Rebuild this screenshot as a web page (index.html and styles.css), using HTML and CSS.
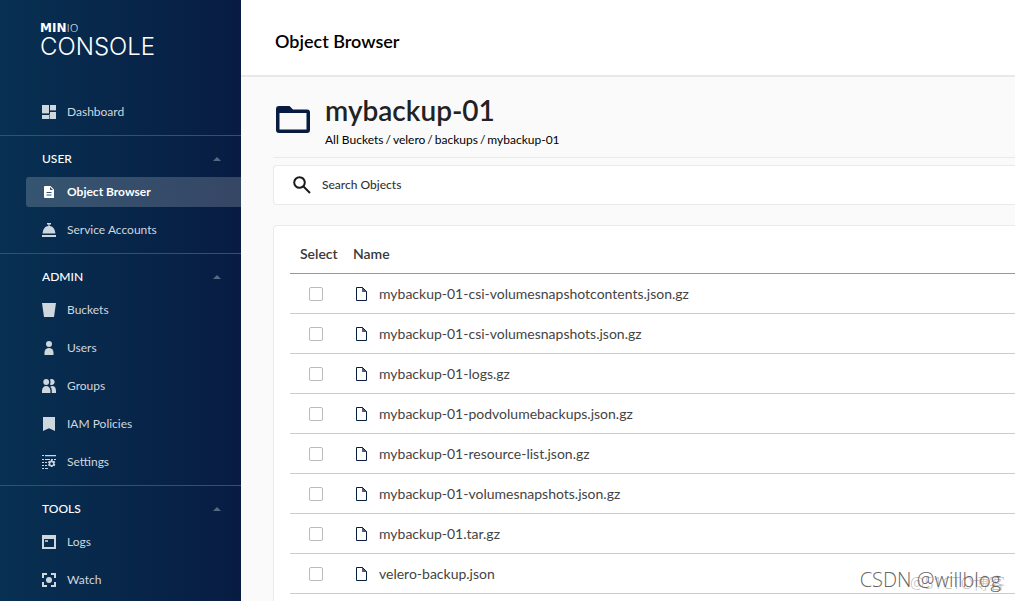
FILE: index.html
```html
<!DOCTYPE html>
<html lang="en">
<head>
<meta charset="utf-8">
<title>MinIO Console</title>
<link rel="stylesheet" href="styles.css">
</head>
<body>
<svg class="defs" aria-hidden="true">
  <symbol id="file" viewBox="0 0 12 16"><path d="M1.500 1.500h6l4 4v9h-10z" fill="none" stroke="currentColor"/><path d="M7 1l5 5H7z" fill="currentColor" opacity=".7"/></symbol>
</svg>
<div class="app">
  <aside class="sidebar">
    <div class="logo"><div class="logo-top"><b>MIN</b>IO</div><div class="logo-main">CONSOLE</div></div>
    <nav>
      <div class="group group-first">
        <a class="item" href="#"><svg viewBox="0 0 14 14"><path d="M0 0h7v8H0zM8 0h6v5H8zM0 10h7v4H0zM8 7h6v7H8z"/><path d="M0 8h7v1H0zM8 5h6v1H8zM7 9h1v5H7z" opacity=".4"/></svg>Dashboard</a>
      </div>
      <div class="group">
        <button class="heading" type="button">USER<span class="caret"></span></button>
        <a class="item active" href="#"><svg viewBox="0 0 14 14"><path fill-rule="evenodd" d="M3 1h5.500L12 4.500V13H3a1 1 0 0 1-1-1V2a1 1 0 0 1 1-1zM8 2v3h3zM4.500 7v1h5V7zM4.500 9.500v1h5v-1z"/></svg>Object Browser</a>
        <a class="item" href="#"><svg viewBox="0 0 14 14"><path d="M5 0h4v1.500H7.600V3C11 3.200 13 6 13.400 10.500H.6C1 6 3 3.200 6.400 3V1.500H5zM0 12h14v2H0z"/></svg>Service Accounts</a>
      </div>
      <div class="group">
        <button class="heading" type="button">ADMIN<span class="caret"></span></button>
        <a class="item" href="#"><svg viewBox="0 0 14 14"><path d="M0 0h14l-2 14H2z"/></svg>Buckets</a>
        <a class="item" href="#"><svg viewBox="0 0 14 14"><circle cx="7" cy="3" r="3"/><path d="M2.500 14v-2.500a4.500 4.500 0 0 1 9 0V14z"/></svg>Users</a>
        <a class="item" href="#"><svg viewBox="0 0 14 14"><circle cx="4.200" cy="3" r="2.900"/><path d="M8 .6a2.900 2.900 0 1 1 0 4.800Q9 3 8 .6zM0 14v-2.500Q.5 7 4.200 7T8.400 11.500V14zM8.200 7.400Q13.500 5.800 14 11.500V14H9.800v-2.500Q9.700 9 8.200 7.400z"/></svg>Groups</a>
        <a class="item" href="#"><svg viewBox="0 0 14 14"><path d="M1 0h12v14l-6-2.800L1 14z"/></svg>IAM Policies</a>
        <a class="item" href="#"><svg viewBox="0 0 14 14"><path d="M0 0h2v1H0zM3 0h11v1.200H3zM0 4h2v1H0zM3 4h5v1H3zM9 4h2v1H9zM12 4h2v1h-2zM0 7h2v1H0zM3 7h2v1H3zM0 10h2v1H0zM3 10h2v1H3zM0 13h2v1H0zM3 13h3v1H3z"/><path fill-rule="evenodd" d="M8.800 5h1.700l.4 1.300 1.500-.5.900 1.500-1 1 1 1.400-.9 1.500-1.500-.5-.4 1.300H8.800l-.4-1.300-1.500.5L6 9.700l1-1-1-1.400.9-1.500 1.500.5zM9.600 7.300a1.400 1.400 0 1 0 .1 0z"/></svg>Settings</a>
      </div>
      <div class="group">
        <button class="heading" type="button">TOOLS<span class="caret"></span></button>
        <a class="item" href="#"><svg viewBox="0 0 14 14"><path fill-rule="evenodd" d="M0 0h14v14H0zM2 4v8h10V4z"/><path d="M3 5h3v2H3z" opacity=".8"/></svg>Logs</a>
        <a class="item" href="#"><svg viewBox="0 0 14 14"><path d="M0 0h5v2H2v3H0zM9 0h5v5h-2V2H9zM0 9h2v3h3v2H0zM12 9h2v5H9v-2h3z"/><circle cx="7" cy="7" r="3"/></svg>Watch</a>
      </div>
    </nav>
  </aside>
  <main class="main">
    <header class="topbar">Object Browser</header>
    <div class="content">
      <section class="bucket">
        <svg class="folder" viewBox="0 0 34 28"><path fill-rule="evenodd" d="M3 0h10.500L17 3.500h14a3 3 0 0 1 3 3V24a3 3 0 0 1-3 3H3a3 3 0 0 1-3-3V3a3 3 0 0 1 3-3zM3.500 7v16.500h27V7z"/></svg>
        <div>
          <h1>mybackup-01</h1>
          <div class="crumbs"><a href="#">All Buckets</a><span>/</span><a href="#">velero</a><span>/</span><a href="#">backups</a><span>/</span><a href="#">mybackup-01</a></div>
        </div>
      </section>
      <label class="search">
        <svg viewBox="0 0 18 18"><circle cx="6.500" cy="6.500" r="5.300"/><path d="M10.500 10.500l6.500 6.500"/></svg>
        <input type="search" aria-label="Search Objects" placeholder="Search Objects">
      </label>
      <section class="card">
        <table>
          <thead><tr><th class="select">Select</th><th>Name</th></tr></thead>
          <tbody>
            <tr><td class="select"><input type="checkbox" aria-label="Select mybackup-01-csi-volumesnapshotcontents.json.gz"></td><td><span class="name"><svg><use href="#file"/></svg>mybackup-01-csi-volumesnapshotcontents.json.gz</span></td></tr>
            <tr><td class="select"><input type="checkbox" aria-label="Select mybackup-01-csi-volumesnapshots.json.gz"></td><td><span class="name"><svg><use href="#file"/></svg>mybackup-01-csi-volumesnapshots.json.gz</span></td></tr>
            <tr><td class="select"><input type="checkbox" aria-label="Select mybackup-01-logs.gz"></td><td><span class="name"><svg><use href="#file"/></svg>mybackup-01-logs.gz</span></td></tr>
            <tr><td class="select"><input type="checkbox" aria-label="Select mybackup-01-podvolumebackups.json.gz"></td><td><span class="name"><svg><use href="#file"/></svg>mybackup-01-podvolumebackups.json.gz</span></td></tr>
            <tr><td class="select"><input type="checkbox" aria-label="Select mybackup-01-resource-list.json.gz"></td><td><span class="name"><svg><use href="#file"/></svg>mybackup-01-resource-list.json.gz</span></td></tr>
            <tr><td class="select"><input type="checkbox" aria-label="Select mybackup-01-volumesnapshots.json.gz"></td><td><span class="name"><svg><use href="#file"/></svg>mybackup-01-volumesnapshots.json.gz</span></td></tr>
            <tr><td class="select"><input type="checkbox" aria-label="Select mybackup-01.tar.gz"></td><td><span class="name"><svg><use href="#file"/></svg>mybackup-01.tar.gz</span></td></tr>
            <tr><td class="select"><input type="checkbox" aria-label="Select velero-backup.json"></td><td><span class="name"><svg><use href="#file"/></svg>velero-backup.json</span></td></tr>
          </tbody>
        </table>
      </section>
    </div>
  </main>
  <div class="mark mark-back">@51CTO博客</div>
  <div class="mark mark-front">CSDN @willblog</div>
</div>
</body>
</html>
```
FILE: styles.css
```css
* { box-sizing: border-box; }
body { margin: 0; font: 14px/20px Lato, sans-serif; color: #222; }
a { color: inherit; text-decoration: none; }
.defs { display: none; }
.app { position: relative; display: flex; height: 100vh; overflow: hidden; }

.sidebar { flex: 0 0 241px; overflow: hidden; background: linear-gradient(90deg, #073052 0%, #081c42 100%); color: #fff; }
.logo { height: 97px; padding: 22px 0 0 40px; }
.logo-top { font: 300 11px/12px "DejaVu Sans", sans-serif; }
.logo-top b { font-size: 12px; font-weight: 700; }
.logo-main { font: 300 24px/24px Inter, sans-serif; }
.group { border-top: 1px solid #35506b; padding: 8px 0; display: flex; flex-direction: column; gap: 8px; }
.group-first { border-top: 0; padding-top: 0; }
.heading { display: flex; align-items: center; justify-content: space-between; height: 30px; margin-bottom: -5px; padding: 0 20px 0 42px; border: 0; background: none; color: #fff; font: 500 12px/20px Lato, sans-serif; }
.caret { border: 4px solid transparent; border-top: 0; border-bottom-color: #566983; }
.item { display: flex; align-items: center; gap: 11px; height: 30px; margin-left: 26px; padding-left: 16px; border-radius: 3px 0 0 3px; color: #d0d7df; font-size: 12px; }
.item svg { width: 14px; height: 14px; fill: #ced6de; }
.item.active { background: rgba(255, 255, 255, .19); color: #fff; font-weight: 700; }
.item.active svg { fill: #fff; }

.main { flex: 1; min-width: 0; background: #fafafa; }
.topbar { height: 77px; padding: 29px 34px 0; border-bottom: 2px solid #e8e8e8; background: #fff; color: #000; font-size: 18px; line-height: 24px; font-weight: 600; }
.content { padding-left: 32px; }
.bucket { display: flex; align-items: center; gap: 15px; height: 81px; padding: 6px 0 0 3px; border-bottom: 1px solid #eaeaea; }
.folder { width: 34px; height: 28px; fill: #081c42; }
h1 { margin: 0; padding-top: 4px; font-size: 28px; line-height: 36px; font-weight: 600; }
.crumbs { display: flex; gap: 2px; font-size: 12px; line-height: 24px; color: #000; }
.search { display: flex; align-items: center; height: 40px; margin-top: 7px; padding-left: 19px; gap: 11px; border: 1px solid #eaeaea; border-right: 0; border-radius: 4px 0 0 4px; background: #fff; }
.search svg { width: 18px; height: 18px; fill: none; stroke: #1a1a1a; stroke-width: 2; }
.search input { flex: 1; min-width: 0; padding: 0; border: 0; outline: 0; background: none; font: 500 12px/20px Lato, sans-serif; }
.search input::placeholder { color: #333; opacity: 1; }

.card { margin-top: 20px; padding: 8px 0 40px 16px; border: 1px solid #eaeaea; border-right: 0; border-radius: 4px 0 0 0; background: #fff; }
table { width: 100%; border-collapse: collapse; }
th { height: 39px; padding: 2px 0 0; text-align: left; font-weight: 600; color: #393939; border-bottom: 1px solid #999; }
td { height: 40px; padding: 1px 0 0; color: #444; border-bottom: 1px solid #ccc; }
th.select { width: 63px; padding-left: 10px; }
td.select { padding-left: 19px; }
.select input { appearance: none; display: block; width: 14px; height: 14px; margin: 0; border: 1px solid #bbb; border-radius: 2px; background: #fff; }
.name { display: flex; align-items: center; gap: 12px; padding-left: 2px; }
.name svg { width: 12px; height: 16px; color: #081c42; }

.mark { position: absolute; font-family: "Open Sans", "Noto Sans CJK SC", sans-serif; font-weight: 300; white-space: nowrap; }
.mark-front { right: 14px; bottom: 9px; font-size: 20px; line-height: 24px; color: #666; }
.mark-back { right: 10px; bottom: 8px; font-size: 16px; line-height: 20px; color: #bbb; }
```
